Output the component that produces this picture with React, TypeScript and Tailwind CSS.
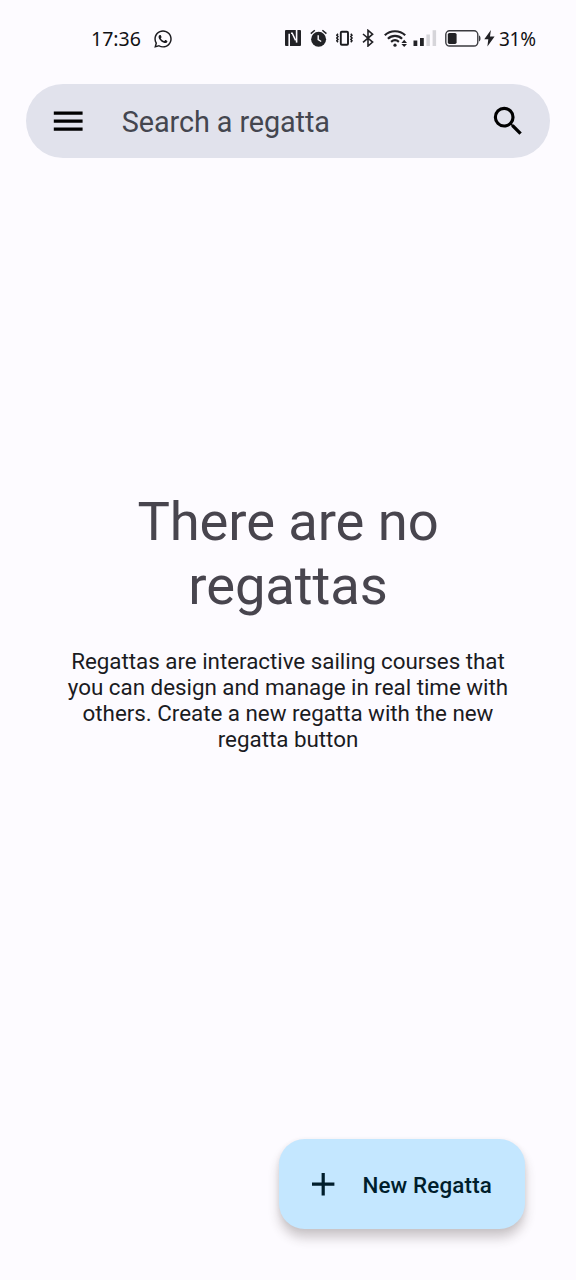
import React from 'react';
import { MdAdd, MdMenu, MdSearch } from 'react-icons/md';
import { FaWhatsapp } from 'react-icons/fa';

function NfcIcon() {
  return (
    <svg className="h-[18px] w-4" viewBox="0 0 16 18" fill="none">
      <rect x="0" y="1" width="16" height="16" rx="1" fill="#222226" />
      <path d="M4.2 17V4.8" stroke="#fdfbff" strokeWidth="1.6" />
      <path d="M6 4.2h1.2l3.4 7.2" stroke="#fdfbff" strokeWidth="1.5" />
      <path d="M11.6 1v12.6" stroke="#fdfbff" strokeWidth="1.6" />
    </svg>
  );
}

function AlarmIcon() {
  return (
    <svg className="h-[18px] w-[18px]" viewBox="0 0 18 18" fill="none">
      <circle cx="8.6" cy="10.3" r="7.5" fill="#222226" />
      <path d="M0.8 4.6L4.8 1.2M16.4 4.6L12.4 1.2" stroke="#222226" strokeWidth="1.5" />
      <path d="M8.2 6.3v4.4l3 1.8" stroke="#fdfbff" strokeWidth="1.4" />
    </svg>
  );
}

function VibrateIcon() {
  return (
    <svg className="h-[18px] w-[18px]" viewBox="0 0 18 18" fill="none" stroke="#1b1b1f">
      <rect x="4.8" y="2.8" width="7.2" height="13" rx="1" strokeWidth="1.9" />
      <path d="M2 4.8l-1.2 1.4 1.2 1.4-1.2 1.4 1.2 1.4-1.2 1.4 1.2 1.4M14.8 4.8l1.2 1.4-1.2 1.4 1.2 1.4-1.2 1.4 1.2 1.4-1.2 1.4" strokeWidth="1.5" />
    </svg>
  );
}

function BluetoothIcon() {
  return (
    <svg className="h-[18px] w-3" viewBox="0 0 12 18" fill="none">
      <path d="M1 5l9.6 8.1-4.6 3.9V1.3l4.6 3.9L1 13.3" stroke="#222226" strokeWidth="1.6" />
    </svg>
  );
}

function WifiIcon() {
  return (
    <svg className="h-[18px] w-6" viewBox="0 0 24 18" fill="none">
      <path d="M0.8 6.3c5.6-5.4 14.8-5.4 20.4 0M3.9 9.7c4-3.8 10.2-3.8 14.2 0M7.1 12.9c2.4-2.1 5.4-2.1 7.8 0" stroke="#222226" strokeWidth="2.2" />
      <circle cx="11" cy="16.2" r="1.6" fill="#222226" />
      <path d="M20.2 10.8l2.8 3.1h-5.6zM20.2 18l2.8-3.1h-5.6z" fill="#222226" />
    </svg>
  );
}

function SignalIcon() {
  return (
    <svg className="h-[18px] w-6" viewBox="0 0 24 18">
      <rect x="0.5" y="11.5" width="3.8" height="5.5" fill="#222226" />
      <rect x="7" y="9" width="3.8" height="8" fill="#222226" />
      <rect x="13.4" y="5.5" width="3.5" height="11.5" fill="#d6d5da" />
      <rect x="19.6" y="1.2" width="3.5" height="15.8" fill="#d6d5da" />
    </svg>
  );
}

function BatteryIcon() {
  return (
    <svg className="h-[18px] w-9" viewBox="0 0 36 18">
      <rect x="0.8" y="1.8" width="32" height="15.2" rx="3.8" fill="none" stroke="#3a3a3f" strokeWidth="1.4" />
      <rect x="2.8" y="3.9" width="8.8" height="11" rx="1.6" fill="#222226" />
      <path d="M34 6.6c2 .4 2 5.4 0 5.8z" fill="#3a3a3f" />
    </svg>
  );
}

function BoltIcon() {
  return (
    <svg className="h-[18px] w-[11px]" viewBox="0 0 11 18">
      <path d="M6.9 1L0.3 10.2h4L3.4 17.4l7.2-9.9H6z" fill="#222226" />
    </svg>
  );
}

function StatusBar() {
  return (
    <header className="flex h-[84px] items-start pt-[29px] pr-10 pl-[91px] font-['Noto_Sans',sans-serif] text-[19.5px] leading-[19px] font-[450] text-[#111114]">
      <span className="w-[51px] whitespace-nowrap">17:36</span>
      <FaWhatsapp className="ml-[11px] size-5 text-[#1b1b1f]" />
      <div className="ml-auto flex items-start">
        <NfcIcon />
        <div className="ml-[9px]"><AlarmIcon /></div>
        <div className="ml-2"><VibrateIcon /></div>
        <div className="ml-2"><BluetoothIcon /></div>
        <div className="ml-[10px]"><WifiIcon /></div>
        <div className="ml-[5px]"><SignalIcon /></div>
        <div className="ml-2"><BatteryIcon /></div>
        <div className="ml-[3px]"><BoltIcon /></div>
        <span className="ml-1 w-[37px] pt-px text-[19px] tracking-[-0.3px] whitespace-nowrap">31%</span>
      </div>
    </header>
  );
}

function SearchBar() {
  return (
    <div className="mx-[25.6px] flex h-[73.6px] items-center rounded-full bg-[#e1e2ec] pr-[23px] pl-[23.8px]">
      <button aria-label="Menu">
        <MdMenu className="size-[38.4px] text-black" />
      </button>
      <span className="ml-[34px] flex-1 pt-[3px] text-[28.8px] leading-9 tracking-[-0.09px] text-[#44464f]">Search a regatta</span>
      <button aria-label="Search">
        <MdSearch className="size-[38.4px] text-black" />
      </button>
    </div>
  );
}

export default function App() {
  return (
    <div className="flex h-[1280px] w-[576px] flex-col overflow-hidden bg-[#fdfbff] font-[Roboto,sans-serif]">
      <StatusBar />
      <SearchBar />
      <main className="flex flex-1 flex-col items-center pt-[332px] text-center">
        <h1 className="text-[54.4px] leading-[64px] tracking-[-0.1px] text-[#48454e]">
          There are no
          <br />
          regattas
        </h1>
        <p className="mt-[30px] text-[22.4px] leading-[26px] tracking-[-0.03px] text-[#1b1b1f]">
          Regattas are interactive sailing courses that
          <br />
          you can design and manage in real time with
          <br />
          others. Create a new regatta with the new
          <br />
          regatta button
        </p>
      </main>
      <footer className="flex justify-end pr-[51px] pb-[51px]">
        <button className="flex h-[90px] w-[246px] items-center rounded-[25.6px] bg-[#c4e7ff] pl-[25px] text-[22.4px] font-medium tracking-[0.16px] text-[#001e2c] shadow-[0_9px_11px_rgba(60,45,45,0.24),0_1px_5px_rgba(60,45,45,0.08)]">
          <MdAdd className="size-[38.4px]" />
          <span className="ml-5 pt-[3px]">New Regatta</span>
        </button>
      </footer>
    </div>
  );
}
